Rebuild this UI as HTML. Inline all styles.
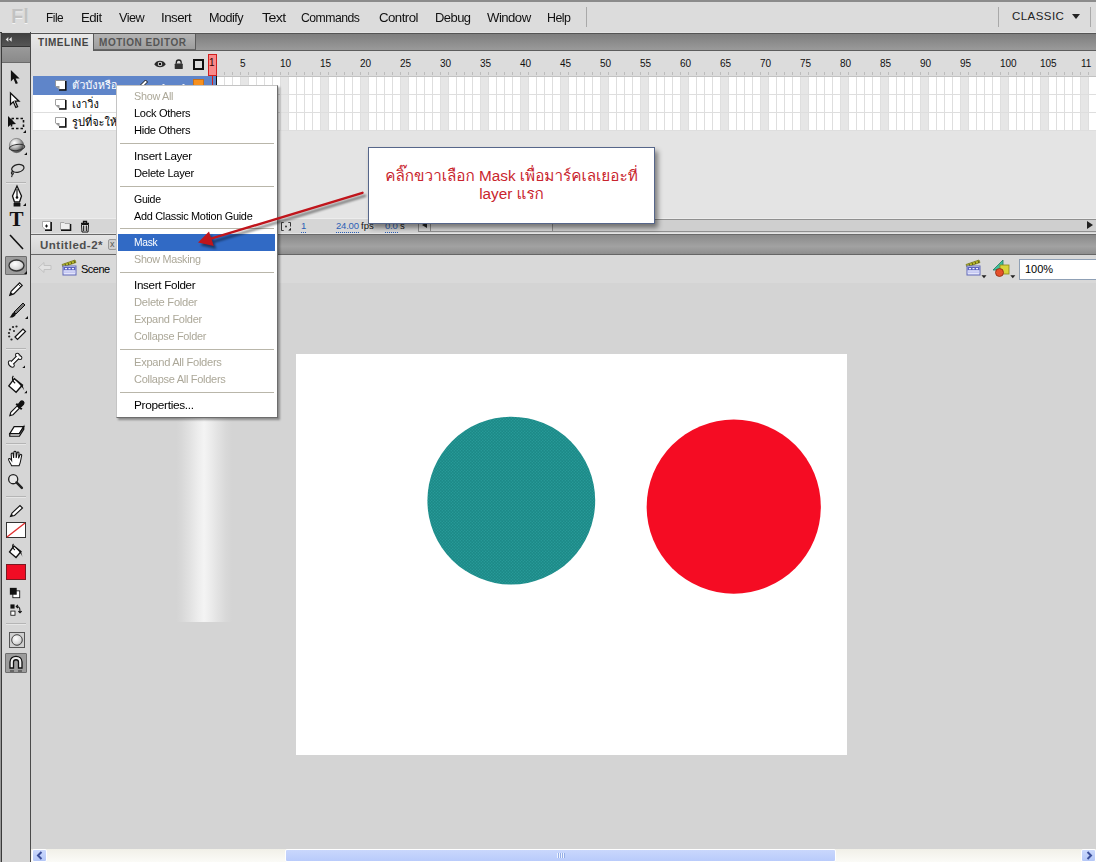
<!DOCTYPE html>
<html lang="th">
<head>
<meta charset="utf-8">
<title>Flash - Mask layer</title>
<style>
*{box-sizing:border-box;margin:0;padding:0}
html,body{width:1096px;height:862px;overflow:hidden}
body{position:relative;background:#d4d4d4;font-family:"Liberation Sans","DejaVu Sans",sans-serif;font-size:11px;color:#000}
.abs{position:absolute}
.t{position:absolute;white-space:nowrap;transform-origin:0 50%}
/* menubar */
#topline{left:0;top:0;width:1096px;height:2px;background:#8b8b8b}
#menubar{left:0;top:2px;width:1096px;height:31px;background:#dcdcdc}
#menubar .t{top:8px;font-size:13.5px;line-height:16px;color:#111;letter-spacing:-0.55px}
.vsep{position:absolute;width:1px;background:#a9a9a9}
/* tools */
#tools{left:0;top:32px;width:31px;height:830px;background:#d6d6d6;border-left:2px solid #3a3a3a;border-right:1px solid #4a4a4a}
/* timeline */
#tl{left:31px;top:32px;width:1065px;height:202px;background:#e4e4e4}
#tabbar{left:0;top:1px;width:1065px;height:18px;background:linear-gradient(#7e7e7e,#9a9a9a);border-top:1px solid #555;border-bottom:1px solid #5d5d5d}
#ruler{left:0;top:19px;width:1065px;height:25px;background:#dcdcdc}
#layers{left:2px;top:44px;width:175px;height:55px}
.lrow{position:absolute;left:0;width:175px;height:18px;background:#fff;border-bottom:1px solid #dedede}
.lrow.sel{background:#5f85c9;color:#fff;border-bottom-color:#5f85c9}
#frames{left:177px;top:44px;width:888px;height:55px;border-top:1px solid #c2c2c2;background-color:#fff;
 background-image:linear-gradient(90deg,#dedede 1px,transparent 1px),linear-gradient(#dedede 1px,transparent 1px),linear-gradient(90deg,transparent 32px,#e6e6e6 32px);
 background-size:8px 18px,8px 18px,40px 18px;background-position:0 0,0 17px,0 0;background-clip:padding-box}
#tlbottom{left:0;top:186px;width:1065px;height:15px;background:#d6d6d6;border-top:1px solid #ececec}
/* doc */
#doctabs{left:31px;top:234px;width:1065px;height:21px;background:linear-gradient(#8a8a8a,#a2a2a2 60%,#8e8e8e);border-top:1px solid #6a6a6a;border-bottom:1px solid #666}
#scenebar{left:31px;top:255px;width:1065px;height:29px;background:#d9d9d9;border-bottom:1px solid #bdbdbd}
#work{left:31px;top:283px;width:1065px;height:566px;background:#d4d4d4}
#stage{left:296px;top:354px;width:551px;height:401px;background:#fff}
#hscroll{left:31px;top:849px;width:1065px;height:13px;background:linear-gradient(#f1f0e8,#fbfbf7)}
/* menu */
#ctx{left:116px;top:85px;width:162px;height:333px;background:#fff;border:1px solid #c4c4c4;border-right-color:#6d6d6d;border-bottom-color:#6d6d6d;box-shadow:2px 2px 2px rgba(0,0,0,.35)}
#ctx .t{left:17px;font-size:11px;line-height:14px;letter-spacing:-0.3px;color:#000}
#ctx .dis{color:#aca899}
#ctx .sep{position:absolute;left:3px;width:154px;height:1px;background:#b9b6aa}

#menubar .fl{font-size:20px;font-weight:bold;color:#c2c2c2;letter-spacing:0;text-shadow:0 1px 0 #f4f4f4;font-family:"Liberation Sans",sans-serif}
#menubar .cls{font-size:11.5px;letter-spacing:0.45px;color:#222;top:6px !important}
#menuline{left:0;top:32px;width:1096px;height:1px;background:#f2f2f2}
/* tool icons */
#tools svg{position:absolute;overflow:visible}
#thead{left:0;top:1px;width:28px;height:13px;background:linear-gradient(#3e3e3e,#555)}
#thead2{left:0;top:14px;width:28px;height:17px;background:linear-gradient(#9a9a9a,#8a8a8a);border-top:1px solid #333;border-bottom:1px solid #6b6b6b}
.tsep{position:absolute;left:4px;width:20px;height:1px;background:#b5b5b5;border-bottom:1px solid #e6e6e6;height:2px}
.tselbg{position:absolute;background:#9c9c9c;border:1px solid #6e6e6e;border-radius:1px}

#tab1{left:0;top:0;width:63px;height:17px;background:linear-gradient(#e9e9e9,#dcdcdc);border-right:1px solid #5a5a5a}
#tab2{left:63px;top:0;width:102px;height:16px;background:linear-gradient(#b4b4b4,#9e9e9e);border-right:1px solid #5a5a5a;border-bottom:1px solid #666}
.tabt{top:3px;font-weight:bold;font-size:10px;line-height:12px;color:#444;letter-spacing:0.55px}
#ruler .n{position:absolute;top:6.5px;font-size:10px;line-height:12px;color:#111}
#ticks{left:177px;top:21px;width:888px;height:3px;background-image:linear-gradient(90deg,#bcbcbc 1px,transparent 1px);background-size:8px 3px}
#playhead{left:177px;top:3px;width:9px;height:22px;background:#f98a8a;border:1px solid #d21f1f}
#playline{left:181px;top:44px;width:1px;height:142px;background:#d21f1f}
.lrow .nm{position:absolute;left:39px;top:2px;font-size:11px;line-height:14px;white-space:nowrap;font-family:"Liberation Sans","Loma","Garuda","Noto Sans Thai","DejaVu Sans",sans-serif}
.lrow svg{position:absolute;left:22px;top:4px}

#tlbottom .u{position:absolute;top:1px;font-size:9.5px;line-height:12px;color:#2b5fb5;border-bottom:1px dotted #2b5fb5;letter-spacing:-0.2px}
#tlbottom .k{position:absolute;top:1px;font-size:9.5px;line-height:12px;color:#111}
#tlscroll{left:387px;top:0;width:678px;height:13px;border:1px solid #8f8f8f;border-right:0;background:#cfcfcf}
#doctab{left:0;top:0;width:120px;height:19px;background:linear-gradient(#e6e6e6,#d4d4d4)}
#scenebar .t{font-size:11px;line-height:14px}
#zoombox{left:988px;top:4px;width:80px;height:21px;background:#fff;border:1px solid #8fa0b5;border-right:0}
#callout{left:368px;top:147px;width:287px;height:77px;background:#fff;border:1px solid #56668a;box-shadow:3px 4px 5px rgba(0,0,0,.45)}
#callout div{position:absolute;left:0;width:285px;text-align:center;font-size:15.3px;line-height:18px;color:#c9252d;white-space:nowrap;font-family:"Liberation Sans","Loma","Garuda","Noto Sans Thai","DejaVu Sans",sans-serif}
#strip{left:176px;top:400px;width:56px;height:222px;background:linear-gradient(90deg,#d4d4d4,#d8d8d8 10%,#e2e2e2 25%,#ececec 38%,#f4f4f4 50%,#ececec 62%,#e2e2e2 75%,#d8d8d8 90%,#d4d4d4)}
#hthumb{left:254px;top:0;width:551px;height:13px;background:linear-gradient(#c9d7fc,#b9cbfb);border:1px solid #fff;border-radius:2px}
.hbtn{position:absolute;top:0;width:15px;height:13px;background:linear-gradient(#cbd9fd,#b4c7f7);border:1px solid #fff;border-radius:2px}
#ctx .hi{color:#fff}
</style>
</head>
<body>
<div class="abs" id="menubar">
  <span class="t m" style="left:46px;transform:scaleX(0.88)">File</span>
  <span class="t m" style="left:81.3px;transform:scaleX(0.98)">Edit</span>
  <span class="t m" style="left:118.8px;transform:scaleX(0.94)">View</span>
  <span class="t m" style="left:161px;transform:scaleX(0.99)">Insert</span>
  <span class="t m" style="left:209.4px;transform:scaleX(0.935)">Modify</span>
  <span class="t m" style="left:262px;transform:scaleX(1.05)">Text</span>
  <span class="t m" style="left:301.3px;transform:scaleX(0.905)">Commands</span>
  <span class="t m" style="left:378.5px;transform:scaleX(0.98)">Control</span>
  <span class="t m" style="left:434.8px;transform:scaleX(0.96)">Debug</span>
  <span class="t m" style="left:487.2px;transform:scaleX(0.975)">Window</span>
  <span class="t m" style="left:546.9px;transform:scaleX(0.92)">Help</span>
  <span class="t fl" style="left:11px;top:6px">Fl</span>
  <div class="vsep" style="left:586px;top:5px;height:20px"></div>
  <div class="vsep" style="left:998px;top:5px;height:20px"></div>
  <div class="vsep" style="left:1090px;top:5px;height:20px"></div>
  <span class="t cls" style="left:1012px">CLASSIC</span>
  <div class="abs" style="left:1072px;top:12px;width:0;height:0;border-left:4px solid transparent;border-right:4px solid transparent;border-top:5px solid #222"></div>
</div>
<div class="abs" id="menuline"></div>
<div class="abs" id="topline"></div>
<div class="abs" id="tools">
  <div class="abs" id="thead"></div>
  <div class="abs" id="thead2"></div>
  <svg style="left:3px;top:4.5px" width="8" height="5.500" viewBox="0 0 12 8"><path d="M5 0 L1 3.5 L5 7 Z M10 0 L6 3.5 L10 7 Z" fill="#e8e8e8"/></svg>
  <!-- selection arrow -->
  <svg style="left:8px;top:38px" width="10.500" height="15" viewBox="0 0 12 17"><path d="M1 0 L1 13 L4 10 L6.5 16 L9 15 L6.5 9.5 L11 9.5 Z" fill="#111"/></svg>
  <!-- subselection -->
  <svg style="left:7px;top:60px" width="12" height="17" viewBox="0 0 12 17"><path d="M1.5 1 L1.5 12.5 L4.3 9.8 L6.8 15.5 L8.6 14.7 L6.2 9.2 L10 9.2 Z" fill="#fff" stroke="#111" stroke-width="1.3"/></svg>
  <!-- free transform -->
  <svg style="left:5px;top:83px" width="20" height="18" viewBox="0 0 20 18"><rect x="4.5" y="3.5" width="12" height="10" fill="none" stroke="#111" stroke-width="1.6" stroke-dasharray="2.5 2"/><path d="M1 1 L1 12 L4 9.5 L9 9 Z" fill="#111"/><path d="M19 15 v3 h-3 z" fill="#111"/></svg>
  <!-- 3d rotation -->
  <svg style="left:6px;top:105px" width="19" height="19" viewBox="0 0 20 20"><defs><radialGradient id="sph" cx="35%" cy="30%" r="70%"><stop offset="0" stop-color="#fff"/><stop offset="0.5" stop-color="#bdbdbd"/><stop offset="1" stop-color="#4a4a4a"/></radialGradient></defs><circle cx="9" cy="9" r="7.5" fill="url(#sph)" stroke="#555" stroke-width="0.6"/><ellipse cx="9.500" cy="11" rx="8.200" ry="3.200" fill="none" stroke="#333" stroke-width="1.100" transform="rotate(-8 9.500 11)"/><path d="M20 16 v3 h-3 z" fill="#111"/></svg>
  <!-- lasso -->
  <svg style="left:6px;top:131px" width="18" height="15" viewBox="0 0 20 18"><ellipse cx="11" cy="6.5" rx="7.5" ry="4.6" fill="none" stroke="#222" stroke-width="1.5" transform="rotate(-12 11 6.5)"/><path d="M5 9.5 C3 10.5 2.5 13 4.5 13.5 C6 13.8 6 11.5 4.5 11.5 M4.5 13.5 L3.5 17" fill="none" stroke="#222" stroke-width="1.3"/></svg>
  <div class="tsep" style="top:150px"></div>
  <!-- pen -->
  <svg style="left:8px;top:153px" width="18" height="24" viewBox="0 0 18 24"><path d="M7 1 L2.5 11 L4.5 17 L9.5 17 L11.5 11 Z" fill="#fff" stroke="#111" stroke-width="1.3"/><path d="M7 4 L7 12" stroke="#111" stroke-width="1.2"/><circle cx="7" cy="12.5" r="1.3" fill="#111"/><rect x="3.6" y="18" width="6.8" height="3.5" fill="#111"/><path d="M16 18 v3 h-3 z" fill="#111"/></svg>
  <!-- Text tool -->
  <span class="t" style="left:7.500px;top:174px;font:bold 21px/26px 'Liberation Serif',serif;color:#111">T</span>
  <!-- line -->
  <svg style="left:7px;top:202px" width="16" height="16" viewBox="0 0 16 16"><path d="M1 1 L14 15" stroke="#111" stroke-width="1.6"/></svg>
  <!-- oval selected -->
  <div class="tselbg" style="left:3px;top:224px;width:22px;height:19px"></div>
  <svg style="left:4px;top:225px" width="22" height="18" viewBox="0 0 22 18"><defs><radialGradient id="ov" cx="40%" cy="35%" r="70%"><stop offset="0" stop-color="#fff"/><stop offset="0.7" stop-color="#d8d8d8"/><stop offset="1" stop-color="#999"/></radialGradient></defs><ellipse cx="10.5" cy="8.5" rx="7.5" ry="5.5" fill="url(#ov)" stroke="#333" stroke-width="1.3"/><path d="M21 14 v3 h-3 z" fill="#111"/></svg>
  <!-- pencil -->
  <svg style="left:6px;top:249px" width="16" height="16" viewBox="0 0 18 18"><path d="M2 16 L3.5 11.5 L13 2 L16 5 L6.5 14.5 Z" fill="#fff" stroke="#111" stroke-width="1.3"/><path d="M2 16 L3.3 12.6 L5.4 14.7 Z" fill="#111"/><path d="M11.5 3.5 L14.5 6.5" stroke="#111" stroke-width="1"/></svg>
  <!-- brush -->
  <svg style="left:6px;top:270px" width="20" height="18" viewBox="0 0 20 18"><path d="M15 1 L17 3 L8 12 L6 10 Z" fill="#777" stroke="#111" stroke-width="1"/><path d="M6 10 L8 12 C7 15 4 16 1.5 15.5 C3.5 14 3.5 11.5 6 10 Z" fill="#111"/><path d="M20 14 v3 h-3 z" fill="#111"/></svg>
  <!-- deco -->
  <svg style="left:4px;top:291px" width="22" height="20" viewBox="0 0 22 20"><path d="M9 14 L17 6 L19.5 8.5 L11.5 16.5 Z" fill="#fff" stroke="#111" stroke-width="1.2"/><g fill="#222"><circle cx="3" cy="10" r="1.1"/><circle cx="4" cy="6.5" r="1.1"/><circle cx="7" cy="4" r="1.1"/><circle cx="10.5" cy="3.5" r="1.1"/><circle cx="3.2" cy="13.5" r="1.1"/><circle cx="5.5" cy="16.5" r="1.1"/><circle cx="8" cy="8" r="1"/></g></svg>
  <div class="tsep" style="top:316px"></div>
  <!-- bone -->
  <svg style="left:5px;top:319px" width="18" height="18" viewBox="0 0 20 20"><path d="M4 15 L13 6" stroke="#111" stroke-width="5" stroke-linecap="round"/><circle cx="3.5" cy="13" r="2.6" fill="#111"/><circle cx="6" cy="16" r="2.6" fill="#111"/><circle cx="11.5" cy="4.5" r="2.6" fill="#111"/><circle cx="14.5" cy="7.5" r="2.6" fill="#111"/><path d="M4 15 L13 6" stroke="#fff" stroke-width="2.6" stroke-linecap="round"/><circle cx="3.5" cy="13" r="1.5" fill="#fff"/><circle cx="6" cy="16" r="1.5" fill="#fff"/><circle cx="11.5" cy="4.5" r="1.5" fill="#fff"/><circle cx="14.5" cy="7.5" r="1.5" fill="#fff"/><path d="M20 16 v3 h-3 z" fill="#111"/></svg>
  <!-- paint bucket -->
  <svg style="left:5px;top:343px" width="20" height="20" viewBox="0 0 22 22"><path d="M8 4 L17 11 L10 19 L2 12 Z" fill="#fff" stroke="#111" stroke-width="1.5"/><path d="M8 4 L17 11 L19 17 C17 13 14 11 8 4 Z" fill="#111"/><path d="M7 1 C5 3 6 7 9 9" fill="none" stroke="#111" stroke-width="1.3"/><path d="M22 17 v3 h-3 z" fill="#111"/></svg>
  <!-- eyedropper -->
  <svg style="left:6px;top:367px" width="16.500" height="18.500" viewBox="0 0 18 20"><path d="M2 18 L3 14.5 L10 7.5 L12.5 10 L5.5 17 Z" fill="#fff" stroke="#111" stroke-width="1.2"/><path d="M9 5 L15 11 M10.5 7.5 L14 3 C15.5 1.5 18 3.5 16.5 5.5 L12.5 9.5" stroke="#111" stroke-width="2.2" fill="#111"/></svg>
  <!-- eraser -->
  <svg style="left:5.500px;top:392px" width="17.500" height="14" viewBox="0 0 20 16"><path d="M7 3 L18 3 L13 11 L2 11 Z" fill="#fff" stroke="#111" stroke-width="1.4"/><path d="M2 11 L13 11 L18 3 L18 6 L13 14 L2 14 Z" fill="#ddd" stroke="#111" stroke-width="1.4"/></svg>
  <div class="tsep" style="top:411px"></div>
  <!-- hand -->
  <svg style="left:5px;top:418px" width="18" height="17.500" viewBox="0 0 20 20"><path d="M5 18 C3 14 1 12 1.5 10 C2.5 9 4 10.5 5 12 L4.5 4.5 C4.5 3 6.5 3 6.7 4.5 L7.3 9 L7.6 2.5 C7.8 1 9.8 1 10 2.5 L10.2 9 L11.3 3.2 C11.6 1.8 13.5 2.2 13.4 3.6 L12.9 9.6 L14.6 5.6 C15.2 4.4 16.9 5 16.5 6.4 C15.5 10 15.5 14 13.5 18 Z" fill="#fff" stroke="#111" stroke-width="1.2"/></svg>
  <!-- zoom -->
  <svg style="left:5px;top:441px" width="16.500" height="16.500" viewBox="0 0 20 20"><circle cx="7.5" cy="7.5" r="5.5" fill="#e8e8e8" stroke="#222" stroke-width="1.6"/><path d="M11.5 11.5 L18 18" stroke="#222" stroke-width="3" stroke-linecap="round"/></svg>
  <div class="tsep" style="top:464px"></div>
  <!-- stroke pencil -->
  <svg style="left:7px;top:471.500px" width="16" height="14" viewBox="0 0 16 14"><path d="M1.5 12.5 L3 9 L11 1.5 L13.5 4 L5.5 11.5 Z" fill="#fff" stroke="#111" stroke-width="1.1"/><path d="M1.5 12.5 L2.6 9.8 L4.4 11.6 Z" fill="#111"/></svg>
  <!-- stroke swatch -->
  <svg style="left:4px;top:490px" width="20" height="16" viewBox="0 0 20 16"><rect x="0.5" y="0.5" width="19" height="15" fill="#fff" stroke="#333"/><path d="M1 15 L19 1" stroke="#e03030" stroke-width="1.4"/></svg>
  <!-- fill bucket small -->
  <svg style="left:6px;top:511px" width="17" height="17" viewBox="0 0 17 17"><path d="M6 3 L13 8.5 L8 14.5 L1.5 9 Z" fill="#fff" stroke="#111" stroke-width="1.3"/><path d="M6 3 L13 8.5 L14.5 14 C13 10 10.5 8.5 6 3 Z" fill="#111"/><path d="M5.5 1 C4 2.5 4.5 5.5 7 7" fill="none" stroke="#111" stroke-width="1.1"/></svg>
  <!-- fill swatch -->
  <div class="abs" style="left:4px;top:532px;width:20px;height:16px;background:#f00c24;border:1px solid #7a1a22"></div>
  <!-- black white -->
  <svg style="left:6.500px;top:555px" width="12" height="12" viewBox="0 0 14 14"><rect x="4.5" y="4.500" width="8" height="8" fill="#fff" stroke="#111"/><rect x="1" y="1" width="8" height="8" fill="#111"/></svg>
  <!-- swap -->
  <svg style="left:7.500px;top:571.500px" width="12.500" height="12.500" viewBox="0 0 15 15"><rect x="0.5" y="0.5" width="5" height="5" fill="#111"/><rect x="1" y="8.500" width="5" height="5" fill="#fff" stroke="#111"/><path d="M8 3 C12 3 12 6 12 10 M9.5 1 L7.5 3 L9.500 5 M10 8.500 L12 10.500 L14 8.500" fill="none" stroke="#111" stroke-width="1.3"/></svg>
  <div class="tsep" style="top:591px"></div>
  <!-- object drawing -->
  <svg style="left:7px;top:600px" width="16" height="16" viewBox="0 0 16 16"><rect x="0.5" y="0.5" width="15" height="15" fill="#d0d0d0" stroke="#555"/><circle cx="8" cy="8" r="5.3" fill="url(#ov)" stroke="#444" stroke-width="1"/></svg>
  <!-- snap magnet -->
  <div class="tselbg" style="left:3px;top:621px;width:22px;height:20px"></div>
  <svg style="left:6px;top:623px" width="16" height="17" viewBox="0 0 16 17"><path d="M2 13 L2 7 C2 -0.500 14 -0.500 14 7 L14 13 L10.500 13 L10.500 7 C10.500 4 5.500 4 5.500 7 L5.500 13 Z" fill="#eee" stroke="#111" stroke-width="1.3"/><path d="M2.500 16 h3 M10.500 16 h3" stroke="#111" stroke-width="1.4" stroke-dasharray="1 1"/></svg>
</div>
<div class="abs" style="left:0;top:33px;width:1px;height:829px;background:#9a9a9a"></div>
<div class="abs" id="tl">
  <div class="abs" id="tabbar">
    <div class="abs" id="tab1"><span class="t tabt" style="left:7px">TIMELINE</span></div>
    <div class="abs" id="tab2"><span class="t tabt" style="left:5px;color:#555">MOTION EDITOR</span></div>
  </div>
  <div class="abs" id="ruler">
    <svg class="abs" style="left:123px;top:7.5px" width="12" height="10.5" viewBox="0 0 14 11"><path d="M0.300 5.500 C3 0.200 11 0.200 13.700 5.500 C11 10 3 10 0.300 5.500 Z" fill="#2a2a2a"/><circle cx="7" cy="5.300" r="2.600" fill="#dcdcdc"/><circle cx="7" cy="5.300" r="1.500" fill="#111"/></svg>
    <svg class="abs" style="left:143px;top:7.5px" width="9.5" height="10.5" viewBox="0 0 11 13"><path d="M2.500 6 V4 C2.500 0.300 8.500 0.300 8.500 4 V6" fill="none" stroke="#222" stroke-width="1.600"/><rect x="0.500" y="5.500" width="10" height="7" rx="1" fill="#333"/></svg>
    <div class="abs" style="left:162px;top:8px;width:11px;height:11px;border:2px solid #111;background:#dcdcdc"></div>
    <div class="abs" id="ticks"></div>
    <span class="n" style="left:209px">5</span><span class="n" style="left:249px">10</span><span class="n" style="left:289px">15</span><span class="n" style="left:329px">20</span><span class="n" style="left:369px">25</span><span class="n" style="left:409px">30</span><span class="n" style="left:449px">35</span><span class="n" style="left:489px">40</span><span class="n" style="left:529px">45</span><span class="n" style="left:569px">50</span><span class="n" style="left:609px">55</span><span class="n" style="left:649px">60</span><span class="n" style="left:689px">65</span><span class="n" style="left:729px">70</span><span class="n" style="left:769px">75</span><span class="n" style="left:809px">80</span><span class="n" style="left:849px">85</span><span class="n" style="left:889px">90</span><span class="n" style="left:929px">95</span><span class="n" style="left:969px">100</span><span class="n" style="left:1009px">105</span><span class="n" style="left:1050px">11</span>
    <div class="abs" id="playhead"></div>
    <span class="n" style="left:178px;top:6px;color:#300">1</span>
  </div>
  <div class="abs" id="layers">
    <div class="lrow sel" style="top:0;height:19px;padding-top:1px"><svg width="12" height="11" viewBox="0 0 12 11"><path d="M0.500 0.500 H10.500 V9.500 H4.500 L0.500 6 Z" fill="#fff" stroke="#8a8a8a" stroke-width="0.8"/><path d="M10.800 1 V10 H4 " fill="none" stroke="#111" stroke-width="1.600"/><path d="M0.500 6 H4.500 V9.500 Z" fill="#999"/></svg><span class="nm">ตัวบังหรือ</span>
      <svg style="left:104px;top:2px" width="12" height="13" viewBox="0 0 12 13"><path d="M1 12 L2 8.500 L8.500 2 L10.500 4 L4 10.500 Z" fill="#fff" stroke="#111" stroke-width="1"/></svg>
      <div class="abs" style="left:129px;top:8px;width:3px;height:3px;border-radius:2px;background:#fff"></div>
      <div class="abs" style="left:149px;top:8px;width:3px;height:3px;border-radius:2px;background:#fff"></div>
      <div class="abs" style="left:160px;top:3px;width:11px;height:11px;background:#f7901e;border:1px solid #c9711a"></div>
    </div>
    <div class="lrow" style="top:19px"><svg width="12" height="11" viewBox="0 0 12 11"><path d="M0.500 0.500 H10.500 V9.500 H4.500 L0.500 6 Z" fill="#fff" stroke="#8a8a8a" stroke-width="0.8"/><path d="M10.800 1 V10 H4 " fill="none" stroke="#111" stroke-width="1.600"/><path d="M0.500 6 H4.500 V9.500 Z" fill="#999"/></svg><span class="nm">เงาวิ่ง</span></div>
    <div class="lrow" style="top:37px"><svg width="12" height="11" viewBox="0 0 12 11"><path d="M0.500 0.500 H10.500 V9.500 H4.500 L0.500 6 Z" fill="#fff" stroke="#8a8a8a" stroke-width="0.8"/><path d="M10.800 1 V10 H4 " fill="none" stroke="#111" stroke-width="1.600"/><path d="M0.500 6 H4.500 V9.500 Z" fill="#999"/></svg><span class="nm">รูปที่จะให้</span></div>
  </div>
  <div class="abs" id="frames"></div>
  <div class="abs" style="left:177px;top:44px;width:9px;height:17px;background:#5f85c9;border-right:1px solid #111"></div>
  <div class="abs" id="playline"></div>
  <div class="abs" id="tlbottom">
    <svg class="abs" style="left:11px;top:2px" width="11" height="11" viewBox="0 0 11 11"><path d="M0.500 0.500 H8.500 V8.500 H3.500 L0.500 6 Z" fill="#fff" stroke="#999" stroke-width="0.8"/><path d="M9.200 1 V9.200 H3" fill="none" stroke="#111" stroke-width="1.500"/><path d="M3 5 h3 M4.500 3.500 v3" stroke="#111" stroke-width="1"/></svg>
    <svg class="abs" style="left:29px;top:2px" width="12" height="11" viewBox="0 0 12 11"><path d="M0.500 1.500 H4 L5 2.500 H10 V8.500 H0.500 Z" fill="#eee" stroke="#999" stroke-width="0.8"/><path d="M10.600 3 V9.200 H1" fill="none" stroke="#111" stroke-width="1.400"/></svg>
    <svg class="abs" style="left:49px;top:1px" width="10" height="13" viewBox="0 0 10 13"><path d="M1 3.500 H9 M3.500 3 V1.500 H6.500 V3" fill="none" stroke="#111" stroke-width="1.300"/><path d="M1.500 4.500 H8.500 L8 12 H2 Z" fill="#eee" stroke="#111" stroke-width="1"/><path d="M3.700 5.500 V11 M6.300 5.500 V11" stroke="#111" stroke-width="1.100"/></svg>
    <svg class="abs" style="left:250px;top:3px" width="10" height="9" viewBox="0 0 11 10"><path d="M3 0.500 H0.500 V9.500 H3 M8 0.500 H10.500 V5" fill="none" stroke="#333" stroke-width="1.100"/><circle cx="5.500" cy="5" r="1.100" fill="#333"/><path d="M11 6.500 v3 h-3 z" fill="#111"/></svg>
    <span class="u" style="left:270px">1</span>
    <span class="u" style="left:305px">24.00</span><span class="k" style="left:330px">fps</span>
    <span class="u" style="left:354px">0.0</span><span class="k" style="left:369px">s</span>
    <div class="abs" id="tlscroll">
      <div class="abs" style="left:0;top:0;width:12px;height:11px;border-right:1px solid #8f8f8f;background:#dcdcdc"></div>
      <div class="abs" style="left:3px;top:2px;width:0;height:0;border-top:3.500px solid transparent;border-bottom:3.500px solid transparent;border-right:5px solid #222"></div>
      <div class="abs" style="left:12px;top:0;width:122px;height:11px;background:#d8d8d8;border-right:1px solid #8f8f8f"></div>
      <div class="abs" style="left:668px;top:1px;width:0;height:0;border-top:4.500px solid transparent;border-bottom:4.500px solid transparent;border-left:6px solid #222"></div>
    </div>
  </div>
</div>
<div class="abs" id="doctabs">
  <div class="abs" id="doctab"><span class="t" style="left:9px;top:3.5px;font-weight:bold;font-size:11.5px;line-height:13px;color:#4e4e4e;letter-spacing:0.5px">Untitled-2*</span>
  <div class="abs" style="left:77px;top:4px;width:9px;height:11px;border:1px solid #9a9a9a;border-radius:2px;background:#cfcfcf"></div><span class="t" style="left:79px;top:3px;font-size:9px;line-height:12px;color:#555">x</span></div>
</div>
<div class="abs" id="scenebar">
  <svg class="abs" style="left:7px;top:6px" width="14" height="13" viewBox="0 0 14 13"><path d="M0.500 6.500 L6 1.500 V4.500 H13 V8.500 H6 V11.500 Z" fill="#e2e2e2" stroke="#c2c2c2" stroke-width="1"/></svg>
  <svg class="abs" style="left:30px;top:2px" width="18" height="20" viewBox="0 0 18 20"><path d="M1 7.500 L14 3 L15 5.500 L2 10 Z" fill="#b9bb2c" stroke="#6e6e10" stroke-width="0.700"/><path d="M4 6.700 l0.800 2.300 M7 5.700 l0.800 2.300 M10 4.700 l0.800 2.300 M13 3.700 l0.800 2.300" stroke="#5c5c12" stroke-width="1"/><rect x="2" y="9" width="13" height="9" fill="#e4e6fc" stroke="#6168b8" stroke-width="1"/><rect x="2.500" y="10" width="12" height="3.200" fill="#5d64c0"/><path d="M4 11.600 h2 M7.500 11.600 h2 M11 11.600 h2" stroke="#eef" stroke-width="1.200"/><rect x="2.500" y="14.500" width="12" height="1.200" fill="#b9bdf0"/></svg>
  <span class="t" style="left:50px;top:7px;letter-spacing:-0.5px">Scene</span>
  <svg class="abs" style="left:934px;top:2px;overflow:visible" width="24" height="20" viewBox="0 0 24 20"><path d="M1 7.500 L14 3 L15 5.500 L2 10 Z" fill="#b9bb2c" stroke="#6e6e10" stroke-width="0.700"/><path d="M4 6.700 l0.800 2.300 M7 5.700 l0.800 2.300 M10 4.700 l0.800 2.300 M13 3.700 l0.800 2.300" stroke="#5c5c12" stroke-width="1"/><rect x="2" y="9" width="13" height="9" fill="#e4e6fc" stroke="#6168b8" stroke-width="1"/><rect x="2.500" y="10" width="12" height="3.200" fill="#5d64c0"/><path d="M4 11.600 h2 M7.500 11.600 h2 M11 11.600 h2" stroke="#eef" stroke-width="1.200"/><rect x="2.500" y="14.500" width="12" height="1.200" fill="#b9bdf0"/><path d="M16.500 18.300 h5 l-2.500 3 z" fill="#222"/></svg>
  <svg class="abs" style="left:961px;top:3px" width="24" height="22" viewBox="0 0 24 22"><path d="M1 12 L11 2 L11 12 Z" fill="#3fbf9b" stroke="#1d7a60" stroke-width="0.800"/><rect x="8" y="7" width="9" height="9" fill="#d9d43a" stroke="#8a861a" stroke-width="0.800"/><circle cx="7.500" cy="14.500" r="4" fill="#e6502a" stroke="#8a2a10" stroke-width="0.800"/><path d="M18.300 17.300 h5 l-2.500 3 z" fill="#222"/></svg>
  <div class="abs" id="zoombox"><span class="t" style="left:5px;top:1.500px">100%</span></div>
</div>
<div class="abs" id="work"></div>
<div class="abs" id="strip"></div>
<div class="abs" id="stage">
  <svg class="abs" style="left:0;top:0" width="551" height="401" viewBox="0 0 551 401">
    <defs><pattern id="hatch" width="3" height="3" patternUnits="userSpaceOnUse"><rect width="3" height="3" fill="#1f8f8d"/><path d="M0 3 L3 0" stroke="#2a9c99" stroke-width="0.800"/><path d="M0 0 L3 3" stroke="#1a817f" stroke-width="0.500"/></pattern></defs>
    <circle cx="215.300" cy="146.600" r="83.900" fill="url(#hatch)"/>
    <circle cx="437.750" cy="152.650" r="87.100" fill="#f50c23"/>
  </svg>
</div>
<div class="abs" id="hscroll">
  <div class="hbtn" style="left:1px"><svg class="abs" style="left:3px;top:1px" width="7" height="9" viewBox="0 0 7 9"><path d="M5.500 1 L2 4.500 L5.500 8" fill="none" stroke="#3b4f9a" stroke-width="2"/></svg></div>
  <div class="abs" id="hthumb"><div class="abs" style="left:271px;top:3px;width:8px;height:5px;background-image:linear-gradient(90deg,#eef3ff 1px,#95aee6 1px,#95aee6 2px,transparent 2px);background-size:2px 5px"></div></div>
  <div class="hbtn" style="left:1050px"><svg class="abs" style="left:4px;top:1px" width="7" height="9" viewBox="0 0 7 9"><path d="M1.500 1 L5 4.500 L1.500 8" fill="none" stroke="#3b4f9a" stroke-width="2"/></svg></div>
</div>
<div class="abs" id="callout"><div style="top:19px">คลิ๊กขวาเลือก Mask เพื่อมาร์คเลเยอะที่</div><div style="top:37px">layer แรก</div></div>

<div class="abs" id="ctx">
  <span class="t dis" style="top:2.5px;transform:scaleX(0.985)">Show All</span>
  <span class="t" style="top:19.5px;transform:scaleX(1.005)">Lock Others</span>
  <span class="t" style="top:36.5px;transform:scaleX(1.016)">Hide Others</span>
  <span class="t" style="top:62.5px;transform:scaleX(1.062)">Insert Layer</span>
  <span class="t" style="top:79.5px;transform:scaleX(1.019)">Delete Layer</span>
  <span class="t" style="top:105.5px;transform:scaleX(0.961)">Guide</span>
  <span class="t" style="top:122.5px;transform:scaleX(0.992)">Add Classic Motion Guide</span>
  <div class="abs" style="left:1px;top:148px;width:157px;height:17px;background:#316ac5"></div>
  <span class="t hi" style="top:149px;transform:scaleX(0.933)">Mask</span>
  <span class="t dis" style="top:166px;transform:scaleX(0.982)">Show Masking</span>
  <span class="t" style="top:192px;transform:scaleX(1.06)">Insert Folder</span>
  <span class="t dis" style="top:209px;transform:scaleX(1.018)">Delete Folder</span>
  <span class="t dis" style="top:226px;transform:scaleX(1.003)">Expand Folder</span>
  <span class="t dis" style="top:243px;transform:scaleX(0.995)">Collapse Folder</span>
  <span class="t dis" style="top:269px;transform:scaleX(1.015)">Expand All Folders</span>
  <span class="t dis" style="top:286px;transform:scaleX(1.003)">Collapse All Folders</span>
  <span class="t" style="top:312px;transform:scaleX(1.079)">Properties...</span>
  <div class="sep" style="top:57px"></div>
  <div class="sep" style="top:100px"></div>
  <div class="sep" style="top:142px"></div>
  <div class="sep" style="top:186px"></div>
  <div class="sep" style="top:263px"></div>
  <div class="sep" style="top:306px"></div>
</div>
<svg class="abs" id="arrow" style="left:180px;top:170px" width="200" height="90" viewBox="180 170 200 90">
  <defs><filter id="ab" x="-10%" y="-20%" width="120%" height="150%"><feGaussianBlur stdDeviation="1.300"/></filter></defs>
  <g opacity="0.450" transform="translate(2.500,3)" filter="url(#ab)"><path d="M362.500 192.800 L211 238.700" stroke="#000" stroke-width="2.600" stroke-linecap="round"/><path d="M198 242.600 L209 231.600 L213.800 246 Z" fill="#000"/></g>
  <path d="M362.500 192.800 L211 238.700" stroke="#c0151c" stroke-width="2.400" stroke-linecap="round"/><path d="M198 242.600 L209 231.600 L213.800 246 Z" fill="#c0151c"/>
</svg>
</body>
</html>
